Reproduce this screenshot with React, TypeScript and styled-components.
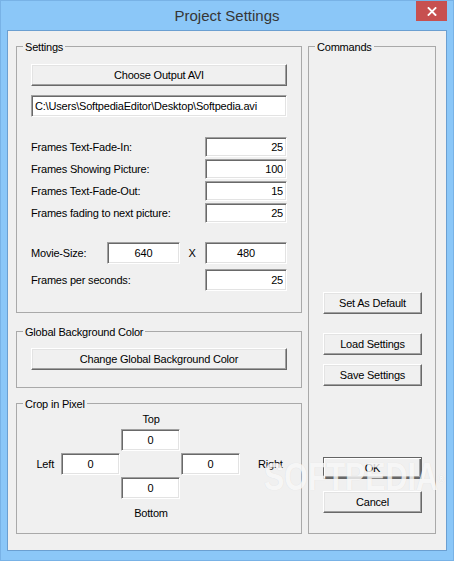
import React from "react";
import styled, { createGlobalStyle } from "styled-components";

const ui = `"Liberation Sans", Arial, sans-serif`;

const GlobalStyle = createGlobalStyle`
  html, body { margin: 0; padding: 0; background: #ffffff; }
  body { font-family: ${ui}; }
  * { box-sizing: border-box; }
`;

const Window = styled.div`
  width: 454px;
  height: 561px;
  border: 1px solid #78b2e6;
  background: #8bc7f8;
  display: flex;
  flex-direction: column;
`;

const TitleBar = styled.div`
  height: 29px;
  flex: none;
  display: grid;
  grid-template-columns: 1fr auto 1fr;
  align-items: start;
  padding: 0 6px;
`;

const Title = styled.div`
  grid-column: 2;
  font-family: ${ui};
  font-size: 15px;
  line-height: 29px;
  color: #363636;
  white-space: nowrap;
`;

const CloseButton = styled.div`
  grid-column: 3;
  justify-self: end;
  width: 31px;
  height: 20px;
  background: #c75050;
  display: flex;
  align-items: center;
  justify-content: center;
`;

const Client = styled.div`
  position: relative;
  flex: 1;
  margin: 0 6px 9px;
  border: 1px solid #6b9fd1;
  background: #f0f0f0;
  display: flex;
  gap: 6px;
  padding: 15px 10px 0 8px;
  overflow: hidden;
`;

const LeftCol = styled.div`
  width: 286px;
  display: flex;
  flex-direction: column;
`;

const Group = styled.div<{ $h: number; $mt?: number; $w?: number }>`
  position: relative;
  height: ${(p) => p.$h}px;
  width: ${(p) => (p.$w ? `${p.$w}px` : "100%")};
  margin-top: ${(p) => p.$mt ?? 0}px;
  border: 1px solid #a9a9a9;
  flex: none;
`;

const GroupLabel = styled.span`
  position: absolute;
  top: -7px;
  left: 6px;
  padding: 0 2px;
  background: #f0f0f0;
  font-family: ${ui};
  font-size: 11px;
  line-height: 14px;
  letter-spacing: -0.2px;
  color: #000;
  white-space: nowrap;
`;

const Stack = styled.div<{ $pt: number }>`
  display: flex;
  flex-direction: column;
  padding: ${(p) => p.$pt}px 14px 0 14px;
`;

const Button = styled.div<{ $mt?: number; $default?: boolean }>`
  height: 22px;
  width: 100%;
  flex: none;
  margin-top: ${(p) => p.$mt ?? 0}px;
  display: flex;
  align-items: center;
  justify-content: center;
  background: #f0f0f0;
  border: 1px solid;
  border-color: ${(p) =>
    p.$default ? "#646464" : "#ffffff #696969 #696969 #ffffff"};
  box-shadow: ${(p) =>
    p.$default
      ? "inset 1px 1px 0 #ffffff, inset -1px -1px 0 #696969, inset -2px -2px 0 #a0a0a0"
      : "inset -1px -1px 0 #a0a0a0, inset 1px 1px 0 #e3e3e3"};
  font-family: ${ui};
  font-size: 11px;
  letter-spacing: -0.2px;
  color: #000;
  white-space: nowrap;
`;

const Field = styled.input<{ $h?: number; $align?: "left" | "right" | "center"; $mt?: number }>`
  display: block;
  height: ${(p) => p.$h ?? 22}px;
  width: 100%;
  margin: ${(p) => p.$mt ?? 0}px 0 0 0;
  padding: 0 3px;
  font-family: ${ui};
  font-size: 11px;
  letter-spacing: -0.2px;
  color: #000;
  background: #ffffff;
  border: 1px solid;
  border-color: #a0a0a0 #ffffff #ffffff #a0a0a0;
  box-shadow: inset 1px 1px 0 #696969, inset -1px -1px 0 #e3e3e3;
  text-align: ${(p) => p.$align ?? "left"};
  outline: none;
`;

const Label = styled.span`
  font-family: ${ui};
  font-size: 11px;
  letter-spacing: -0.2px;
  color: #000;
  white-space: nowrap;
`;

const FrameList = styled.div`
  display: flex;
  flex-direction: column;
  gap: 2px;
  margin-top: 20px;
`;

const FrameRow = styled.div`
  display: grid;
  grid-template-columns: 1fr 82px;
  align-items: center;
  height: 20px;
`;

const SizeRow = styled.div<{ $mt: number }>`
  display: grid;
  grid-template-columns: 76px 74px 1fr 82px;
  align-items: center;
  height: 22px;
  margin-top: ${(p) => p.$mt}px;
`;

const Times = styled(Label)`
  text-align: center;
  padding-right: 2px;
`;

const CropGrid = styled.div`
  display: grid;
  grid-template-columns: 44px 60px 60px 60px 1fr;
  grid-template-rows: 16px 22px 22px 22px 18px;
  row-gap: 2px;
  padding-top: 7px;
`;

const CropCell = styled.div<{ $col: number; $row: number; $justify?: string; $align?: string; $pad?: string }>`
  grid-column: ${(p) => p.$col};
  grid-row: ${(p) => p.$row};
  justify-self: ${(p) => p.$justify ?? "stretch"};
  align-self: ${(p) => p.$align ?? "center"};
  padding: ${(p) => p.$pad ?? "0"};
  display: flex;
`;

const CropField = styled(Field)`
  width: 59px;
`;

const CommandStack = styled.div`
  height: 100%;
  display: flex;
  flex-direction: column;
  justify-content: flex-end;
  padding: 0 13px 20px 14px;
`;

const Watermark = styled.div`
  position: absolute;
  left: 256px;
  top: 427px;
  font-family: ${ui};
  font-weight: bold;
  font-size: 38px;
  line-height: 38px;
  color: rgba(255, 255, 255, 0.8);
  text-shadow: 0 0 1px rgba(0, 0, 0, 0.1);
  transform: scaleX(0.8);
  transform-origin: left top;
  pointer-events: none;
  white-space: nowrap;
  z-index: 2;

  sup {
    font-size: 12px;
    vertical-align: top;
    position: relative;
    top: 2px;
  }
`;

const frames: [string, string][] = [
  ["Frames Text-Fade-In:", "25"],
  ["Frames Showing Picture:", "100"],
  ["Frames Text-Fade-Out:", "15"],
  ["Frames fading to next picture:", "25"],
];

export default function App() {
  return (
    <>
      <GlobalStyle />
      <Window>
        <TitleBar>
          <Title>Project Settings</Title>
          <CloseButton>
            <svg width="10" height="9" viewBox="0 0 10 9">
              <path d="M1.5 1 L8.5 8 M8.5 1 L1.5 8" stroke="#ffffff" strokeWidth="1.8" strokeLinecap="square" />
            </svg>
          </CloseButton>
        </TitleBar>
        <Client>
          <LeftCol>
            <Group $h={267}>
              <GroupLabel>Settings</GroupLabel>
              <Stack $pt={17}>
                <Button>Choose Output AVI</Button>
                <Field $mt={9} readOnly defaultValue="C:\Users\SoftpediaEditor\Desktop\Softpedia.avi" />
                <FrameList>
                  {frames.map(([label, value]) => (
                    <FrameRow key={label}>
                      <Label>{label}</Label>
                      <Field $h={20} $align="right" readOnly defaultValue={value} />
                    </FrameRow>
                  ))}
                </FrameList>
                <SizeRow $mt={19}>
                  <Label>Movie-Size:</Label>
                  <Field $align="center" readOnly defaultValue="640" style={{ width: 73 }} />
                  <Times>X</Times>
                  <Field $align="center" readOnly defaultValue="480" />
                </SizeRow>
                <SizeRow $mt={5}>
                  <Label style={{ gridColumn: "1 / 4" }}>Frames per seconds:</Label>
                  <Field $align="right" readOnly defaultValue="25" />
                </SizeRow>
              </Stack>
            </Group>
            <Group $h={57} $mt={18}>
              <GroupLabel>Global Background Color</GroupLabel>
              <Stack $pt={16}>
                <Button>Change Global Background Color</Button>
              </Stack>
            </Group>
            <Group $h={131} $mt={15}>
              <GroupLabel>Crop in Pixel</GroupLabel>
              <CropGrid>
                <CropCell $col={3} $row={1} $justify="center">
                  <Label>Top</Label>
                </CropCell>
                <CropCell $col={3} $row={2}>
                  <CropField $align="center" readOnly defaultValue="0" />
                </CropCell>
                <CropCell $col={1} $row={3} $justify="end" $pad="0 7px 0 0">
                  <Label>Left</Label>
                </CropCell>
                <CropCell $col={2} $row={3}>
                  <CropField $align="center" readOnly defaultValue="0" />
                </CropCell>
                <CropCell $col={4} $row={3}>
                  <CropField $align="center" readOnly defaultValue="0" />
                </CropCell>
                <CropCell $col={5} $row={3} $pad="0 0 0 17px">
                  <Label>Right</Label>
                </CropCell>
                <CropCell $col={3} $row={4}>
                  <CropField $align="center" readOnly defaultValue="0" />
                </CropCell>
                <CropCell $col={3} $row={5} $justify="center" $align="end">
                  <Label>Bottom</Label>
                </CropCell>
              </CropGrid>
            </Group>
          </LeftCol>
          <Group $h={488} $w={128}>
            <GroupLabel>Commands</GroupLabel>
            <CommandStack>
              <Button>Set As Default</Button>
              <Button $mt={19}>Load Settings</Button>
              <Button $mt={9}>Save Settings</Button>
              <Button $mt={71} $default>
                OK
              </Button>
              <Button $mt={12}>Cancel</Button>
            </CommandStack>
          </Group>
          <Watermark>
            SOFTPEDIA<sup>®</sup>
          </Watermark>
        </Client>
      </Window>
    </>
  );
}
